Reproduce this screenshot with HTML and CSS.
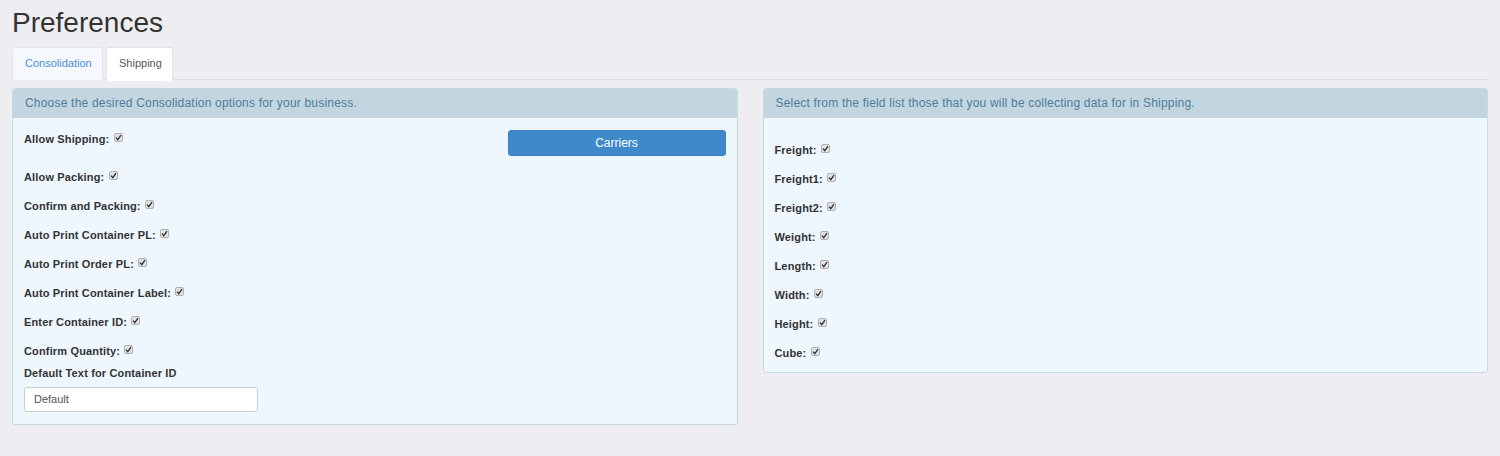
FILE: index.html
```html
<!DOCTYPE html>
<html>
<head>
<meta charset="utf-8">
<link rel="stylesheet" href="styles.css">
</head>
<body>
<h1 class="title">Preferences</h1>
<div class="tabs">
  <div class="tab tab-inactive">Consolidation</div>
  <div class="tab tab-active">Shipping</div>
</div>
<div class="panels">
  <div class="panel">
    <div class="panel-head">Choose the desired Consolidation options for your business.</div>
    <div class="panel-body body-left">
      <div class="opts">
        <div class="row-first">
          <div class="opt">Allow Shipping: <span class="cb"><svg viewBox="0 0 9 9" width="9" height="9"><path d="M2 4.6 L3.8 6.6 L7 2.2" fill="none" stroke="#333" stroke-width="1.4"/></svg></span></div>
          <button class="btn">Carriers</button>
        </div>
        <div class="opt">Allow Packing: <span class="cb"><svg viewBox="0 0 9 9" width="9" height="9"><path d="M2 4.6 L3.8 6.6 L7 2.2" fill="none" stroke="#333" stroke-width="1.4"/></svg></span></div>
        <div class="opt">Confirm and Packing: <span class="cb"><svg viewBox="0 0 9 9" width="9" height="9"><path d="M2 4.6 L3.8 6.6 L7 2.2" fill="none" stroke="#333" stroke-width="1.4"/></svg></span></div>
        <div class="opt">Auto Print Container PL: <span class="cb"><svg viewBox="0 0 9 9" width="9" height="9"><path d="M2 4.6 L3.8 6.6 L7 2.2" fill="none" stroke="#333" stroke-width="1.4"/></svg></span></div>
        <div class="opt">Auto Print Order PL: <span class="cb"><svg viewBox="0 0 9 9" width="9" height="9"><path d="M2 4.6 L3.8 6.6 L7 2.2" fill="none" stroke="#333" stroke-width="1.4"/></svg></span></div>
        <div class="opt">Auto Print Container Label: <span class="cb"><svg viewBox="0 0 9 9" width="9" height="9"><path d="M2 4.6 L3.8 6.6 L7 2.2" fill="none" stroke="#333" stroke-width="1.4"/></svg></span></div>
        <div class="opt">Enter Container ID: <span class="cb"><svg viewBox="0 0 9 9" width="9" height="9"><path d="M2 4.6 L3.8 6.6 L7 2.2" fill="none" stroke="#333" stroke-width="1.4"/></svg></span></div>
        <div class="opt">Confirm Quantity: <span class="cb"><svg viewBox="0 0 9 9" width="9" height="9"><path d="M2 4.6 L3.8 6.6 L7 2.2" fill="none" stroke="#333" stroke-width="1.4"/></svg></span></div>
      </div>
      <div class="field">
        <div class="field-label">Default Text for Container ID</div>
        <div class="input">Default</div>
      </div>
    </div>
  </div>
  <div class="panel">
    <div class="panel-head">Select from the field list those that you will be collecting data for in Shipping.</div>
    <div class="panel-body body-right">
      <div class="opts">
        <div class="opt">Freight: <span class="cb"><svg viewBox="0 0 9 9" width="9" height="9"><path d="M2 4.6 L3.8 6.6 L7 2.2" fill="none" stroke="#333" stroke-width="1.4"/></svg></span></div>
        <div class="opt">Freight1: <span class="cb"><svg viewBox="0 0 9 9" width="9" height="9"><path d="M2 4.6 L3.8 6.6 L7 2.2" fill="none" stroke="#333" stroke-width="1.4"/></svg></span></div>
        <div class="opt">Freight2: <span class="cb"><svg viewBox="0 0 9 9" width="9" height="9"><path d="M2 4.6 L3.8 6.6 L7 2.2" fill="none" stroke="#333" stroke-width="1.4"/></svg></span></div>
        <div class="opt">Weight: <span class="cb"><svg viewBox="0 0 9 9" width="9" height="9"><path d="M2 4.6 L3.8 6.6 L7 2.2" fill="none" stroke="#333" stroke-width="1.4"/></svg></span></div>
        <div class="opt">Length: <span class="cb"><svg viewBox="0 0 9 9" width="9" height="9"><path d="M2 4.6 L3.8 6.6 L7 2.2" fill="none" stroke="#333" stroke-width="1.4"/></svg></span></div>
        <div class="opt">Width: <span class="cb"><svg viewBox="0 0 9 9" width="9" height="9"><path d="M2 4.6 L3.8 6.6 L7 2.2" fill="none" stroke="#333" stroke-width="1.4"/></svg></span></div>
        <div class="opt">Height: <span class="cb"><svg viewBox="0 0 9 9" width="9" height="9"><path d="M2 4.6 L3.8 6.6 L7 2.2" fill="none" stroke="#333" stroke-width="1.4"/></svg></span></div>
        <div class="opt">Cube: <span class="cb"><svg viewBox="0 0 9 9" width="9" height="9"><path d="M2 4.6 L3.8 6.6 L7 2.2" fill="none" stroke="#333" stroke-width="1.4"/></svg></span></div>
      </div>
    </div>
  </div>
</div>
</body>
</html>
```

FILE: styles.css
```css
* { box-sizing: border-box; }
html, body { margin: 0; padding: 0; }
body {
  background: #eeedf2;
  font-family: "Liberation Sans", Arial, sans-serif;
  color: #333;
  padding: 7px 12px 0 12px;
  height: 456px;
  overflow: hidden;
}
.title {
  margin: 0 0 8px 0;
  font-size: 28px;
  font-weight: normal;
  line-height: 32px;
  color: #333;
}
.tabs {
  display: flex;
  gap: 3px;
  height: 33px;
  border-bottom: 1px solid #dddddd;
  margin-bottom: 8px;
}
.tab {
  height: 33px;
  line-height: 31px;
  font-size: 11px;
  padding: 0 12px;
  border: 1px solid #e4e4ea;
  border-bottom: none;
  border-radius: 3px 3px 0 0;
}
.tab-inactive {
  background: #f5f9fe;
  color: #4a8fd3;
  width: 91px;
}
.tab-active {
  background: #ffffff;
  color: #555;
  border-color: #e2e2e6;
  width: 67px;
  height: 34px;
}
.panels {
  display: flex;
  align-items: flex-start;
  gap: 25px;
}
.panel {
  flex: 1 1 0;
  background: #eef6fe;
  border: 1px solid #c9d9e2;
  border-radius: 3px;
  overflow: hidden;
}
.panel-head {
  height: 29px;
  line-height: 29px;
  background: #c3d5df;
  color: #4d7d9c;
  font-size: 12px;
  letter-spacing: 0.2px;
  padding: 0 11px 0 12px;
  white-space: nowrap;
}
.panel-body {
  padding: 12px 11px 12px 11px;
}
.body-right {
  padding: 25px 11px 11px 11px;
}
.opts {
  display: flex;
  flex-direction: column;
  gap: 14px;
}
.row-first {
  display: flex;
  justify-content: space-between;
  align-items: flex-start;
  height: 26px;
}
.row-first .opt { margin-top: 2px; }
.opt {
  font-size: 11px;
  font-weight: bold;
  line-height: 15px;
  height: 15px;
  letter-spacing: 0.15px;
  color: #333;
  white-space: nowrap;
}
.cb {
  display: inline-block;
  width: 9px;
  height: 9px;
  vertical-align: top;
  margin-top: 1px;
  margin-left: 1px;
  background: #e2e2e2;
  border: 1px solid #b0b0b0;
  border-radius: 2px;
  position: relative;
}
.cb svg {
  position: absolute;
  left: -1px;
  top: -1px;
}
.btn {
  width: 218px;
  height: 26px;
  background: #3d89c9;
  border: 1px solid #3a81be;
  border-radius: 3px;
  color: #fff;
  font-family: "Liberation Sans", Arial, sans-serif;
  font-size: 12px;
  padding: 0;
}
.field {
  margin-top: 7px;
}
.field-label {
  font-size: 11px;
  font-weight: bold;
  line-height: 15px;
  letter-spacing: 0.15px;
  color: #333;
}
.input {
  margin-top: 6px;
  width: 234px;
  height: 25px;
  background: #fff;
  border: 1px solid #ccc;
  border-radius: 3px;
  font-size: 11px;
  line-height: 23px;
  padding: 0 9px;
  color: #555;
}
```
